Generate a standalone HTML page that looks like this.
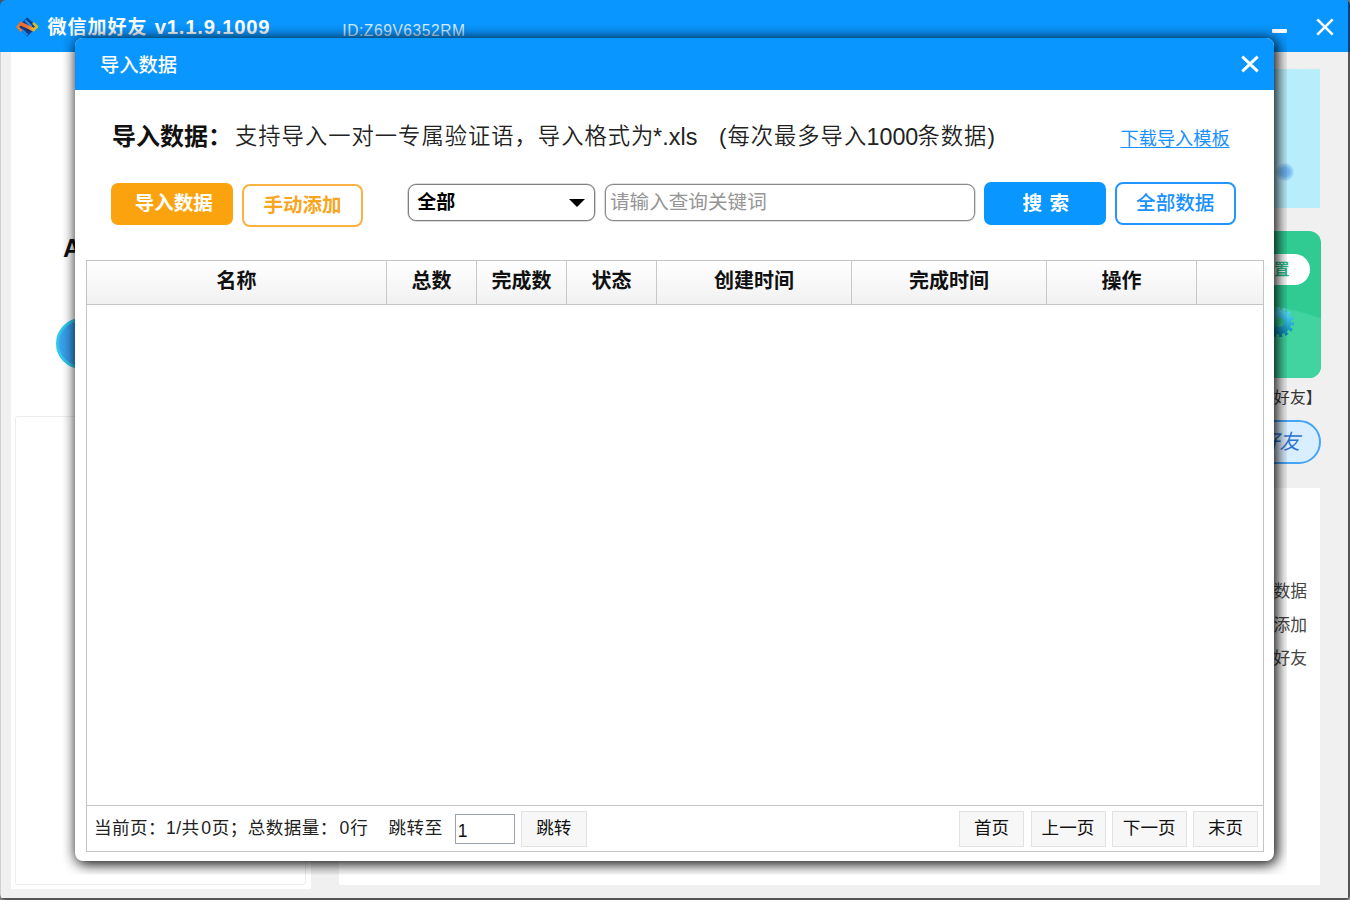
<!DOCTYPE html>
<html lang="zh-CN">
<head>
<meta charset="utf-8">
<title>微信加好友</title>
<style>
*{box-sizing:border-box;margin:0;padding:0}
html,body{width:1350px;height:900px;overflow:hidden;background:#f0f0f0}
body{position:relative;font-family:"Liberation Sans","Noto Sans CJK SC",sans-serif;color:#111}
.abs{position:absolute}
#win{position:absolute;left:0;top:0;width:1350px;height:900px;background:#f0f0f0;overflow:hidden}
#titlebar{position:absolute;left:0;top:0;width:1350px;height:52px;background:#0996ff}
#apptitle{position:absolute;left:47.6px;top:14px;font-size:19px;font-weight:bold;color:#fff;line-height:26px;white-space:nowrap;letter-spacing:1px}
#apptitle b{letter-spacing:.78px;font-size:20.3px;margin-left:.8px}
#appid{position:absolute;left:342.3px;top:21px;font-size:15.6px;color:#d4ebff;line-height:20px;white-space:nowrap;letter-spacing:.55px}

/* background app */
#lp{position:absolute;left:11px;top:52px;width:300px;height:837px;background:#fff}
#lpin{position:absolute;left:15px;top:416px;width:291px;height:469px;border:1px solid #ececec;border-radius:3px}
#rp{position:absolute;left:339px;top:487.5px;width:981px;height:397.5px;background:#fff}
#bluebox{position:absolute;left:338px;top:69px;width:982px;height:139px;background:#b8eefc}
#radio{position:absolute;left:1276px;top:162.5px;width:18px;height:18px;border-radius:50%;background:radial-gradient(circle,#68aeec 0,#72b6ef 35%,#a0d8f8 62%,rgba(184,238,252,0) 100%)}
#green{position:absolute;left:1100px;top:231px;width:221px;height:147px;border-radius:12px;background:#2fcb93;overflow:hidden}
#green:after{content:"";position:absolute;left:-40px;top:72px;width:340px;height:200px;border-radius:50%;background:#41d3a0}
#gpill{position:absolute;left:1222px;top:253.7px;width:87.5px;height:31px;border-radius:15.5px;background:#fff;color:#2bb988;font-size:15.5px;font-weight:bold;line-height:32px;white-space:nowrap;text-align:right;padding-right:20px}
#gear{position:absolute;left:1263.5px;top:306.5px;width:30.5px;height:30.5px}
#lbl1{position:absolute;left:1190px;top:386.5px;width:131.5px;text-align:right;font-size:15.8px;line-height:22px;color:#333;white-space:nowrap}
#pill2{position:absolute;left:1180px;top:420px;width:141px;height:44px;border-radius:22px;border:2px solid #46a4f7;background:#d9efff;color:#2e72d2;font-size:20.5px;line-height:40px;text-align:right;padding-right:19px;white-space:nowrap;font-style:italic}
.rt{position:absolute;left:1206px;width:101px;text-align:right;font-size:16.8px;line-height:22px;color:#444;white-space:nowrap}
#bigA{position:absolute;left:63px;top:232px;font-size:25px;font-weight:bold;line-height:32px;color:#111;font-family:"Liberation Sans",sans-serif}
#lpill{position:absolute;left:56px;top:317.5px;width:160px;height:51.5px;border-radius:26px;border:3px solid #2fc6ea;background:linear-gradient(90deg,#3aa3ec,#2b86dc 30px)}
#bd-l{position:absolute;left:0;top:52px;width:1px;height:848px;background:#cfcfcf}
#bd-r{position:absolute;left:1348px;top:0;width:2px;height:900px;background:linear-gradient(#05407c 0,#05407c 52px,#555 52px)}
#bd-b{position:absolute;left:0;top:898px;width:1350px;height:2px;background:#555}
.cnr{position:absolute;width:8px;height:8px}
/* dialog */
#dlgclip{position:absolute;left:0;top:0;width:1350px;height:900px;clip-path:inset(25px 63px 25.5px 62px)}
#dlg{position:absolute;left:75px;top:38px;width:1199px;height:823px;background:#fff;border-radius:8px;box-shadow:2px 2px 14px 1px rgba(0,0,0,1)}
#dlgbar{position:absolute;left:0;top:0;width:100%;height:52px;background:#0996ff;border-radius:8px 8px 0 0}
#dlgtitle{position:absolute;left:25px;top:15px;font-size:19.3px;font-weight:500;color:#fff;line-height:26px;white-space:nowrap}
.btn{position:absolute;font-size:19.2px;text-align:center;white-space:nowrap;border-radius:6px}

/* dialog content */
#hd{position:absolute;left:37px;top:83px;font-size:24px;font-weight:bold;line-height:32px;white-space:nowrap;color:#111}
#desc{position:absolute;left:160px;top:82.5px;font-size:23.3px;font-weight:350;line-height:32px;white-space:nowrap;color:#222}
#desc span{position:absolute;top:0}
#desc .cj{font-size:22.3px;letter-spacing:1px;top:.8px}
#lnk{position:absolute;left:1045.5px;top:87.7px;font-size:18.2px;line-height:26px;color:#1890ff;text-decoration:underline;text-decoration-thickness:1.4px;text-underline-offset:2.2px;white-space:nowrap}
#b1{left:36px;top:144.5px;width:121.5px;height:42.5px;line-height:41px;background:#fba30f;color:#fff;font-weight:bold;font-size:19.5px;padding-left:4px;border-radius:7px}
#b2{left:167px;top:145.5px;width:121px;height:43.5px;line-height:39px;border:2px solid #fbb240;color:#f8a520;background:#fff;font-weight:bold;font-size:19.5px;border-radius:8px}
#sel{position:absolute;left:333.2px;top:146px;width:187px;height:37.3px;border:1px solid #808080;border-radius:8px;background:#fff;box-shadow:0 0 0 .6px rgba(128,128,128,.55)}
#sel span{position:absolute;left:8px;top:4.8px;font-size:19px;font-weight:bold;line-height:26px;color:#000}
#sel i{position:absolute;left:160px;top:13.5px;width:0;height:0;border-left:8px solid transparent;border-right:8px solid transparent;border-top:8px solid #000}
#inp{position:absolute;left:529.8px;top:146px;width:370.2px;height:37.3px;border:1px solid #8a8a8a;border-radius:8px;background:#fff;box-shadow:0 0 0 .6px rgba(138,138,138,.5)}
#inp span{position:absolute;left:4.2px;top:3.8px;font-size:19.6px;line-height:26px;color:#959595}
#b3{padding-left:2px;left:909px;top:144.4px;width:121.5px;height:42.8px;line-height:42.4px;background:#0996ff;color:#fff;font-weight:bold;font-size:19.6px;word-spacing:2px;border-radius:7px}
#b4{left:1039.5px;top:144px;width:121.5px;height:43px;line-height:39.6px;border:2px solid #2395ff;color:#1890ff;background:#fff;font-size:19.6px;font-weight:500;border-radius:8px}
/* table */
#tbl{position:absolute;left:11px;top:222px;width:1178px;height:592px;border:1px solid #c4c4c4;background:#fff}
#thead{position:absolute;left:0;top:0;width:100%;height:44px;border-bottom:1px solid #c4c4c4;background:linear-gradient(#ffffff,#f1f1f1)}
.th{position:absolute;top:0;height:43px;line-height:41px;text-align:center;font-size:20px;font-weight:bold;color:#111;border-right:1px solid #c8c8c8}
#tfoot{position:absolute;left:0;bottom:0;width:100%;height:46px;border-top:1px solid #c4c4c4;background:#fff;font-size:17.6px;color:#222}
#tfoot span{position:absolute;top:10px;line-height:24px;white-space:nowrap}
#tfoot span i{font-style:normal;margin-left:1.7px;margin-right:.5px}
.pb{position:absolute;top:4.5px;height:36px;line-height:33px;text-align:center;border:1px solid #e2e2e2;background:#f7f7f7;font-size:17.6px;color:#111}
#pg{position:absolute;left:367.5px;top:7.5px;width:60px;height:30px;border:1px solid #9aa2ad;background:#fff;font-size:17.5px;line-height:32px;padding-left:2.2px;color:#111}
</style>
</head>
<body>
<div id="win">
  <div id="titlebar">
    <div id="apptitle">微信加好友 <b>v1.1.9.1009</b></div>
    <div id="appid">ID:Z69V6352RM</div>
    <svg id="appicon" style="position:absolute;left:16px;top:16px;width:22.5px;height:21.5px" viewBox="0 0 24 23">
      <defs><linearGradient id="ig" x1="0" y1="0" x2="1" y2="0"><stop offset="0" stop-color="#ee6a2a"/><stop offset=".45" stop-color="#ef6f3a"/><stop offset="1" stop-color="#f6a62a"/></linearGradient></defs>
      <polygon points="12,1.6 22.8,11.6 12,22 1.4,11.6" fill="#0d3f8f"/>
      <path d="M10.6 3.8 L17.6 10.4 L16 12 L9 5.4 Z" fill="#1f8fee"/>
      <path d="M6.6 13.6 L13 19.8 L11.6 21.2 L5 15 Z" fill="#1f8fee"/>
      <path d="M9 9.5 L15 15.2 L13.5 16.5 L7.6 11 Z" fill="#0a2a66"/>
      <path d="M6 16.2 L1.6 11.6 L5.9 7.7" fill="none" stroke="#ee7a2c" stroke-width="2.6" stroke-linejoin="round"/>
      <path d="M5.2 8.2 L18.6 14.6" fill="none" stroke="url(#ig)" stroke-width="4" stroke-linecap="round"/>
      <path d="M18.2 7.4 L22.4 11.5 L18.4 14.8" fill="none" stroke="#d6bf22" stroke-width="2.8" stroke-linejoin="round"/>
    </svg>
    <div id="minb" style="position:absolute;left:1272px;top:29px;width:15px;height:4px;background:#fff;border-radius:1px"></div>
    <svg style="position:absolute;left:1315px;top:17px;width:20px;height:20px" viewBox="0 0 20 20"><path d="M2.3 2.3 L17.7 17.7 M17.7 2.3 L2.3 17.7" stroke="#fff" stroke-width="2.6" fill="none"/></svg>

  </div>
  
  <div id="lp"></div>
  <div id="lpin"></div>
  <div id="bigA">A</div>
  <div id="lpill"></div>
  <div id="bluebox"></div>
  <div id="radio"></div>
  <div id="green"></div>
  <div id="gpill">设置</div>
  <svg id="gear" viewBox="0 0 32 32"><defs><linearGradient id="gg" x1="0" y1="0" x2="0" y2="1"><stop offset="0" stop-color="#58dcfb"/><stop offset="1" stop-color="#0a86b4"/></linearGradient></defs><g fill="url(#gg)" stroke="url(#gg)"><circle cx="16" cy="16" r="12.6" stroke="none"/><g stroke-width="3.6" stroke-dasharray="3.2 3.08" fill="none"><circle cx="16" cy="16" r="14"/></g></g><circle cx="16" cy="16" r="5" fill="#2fcb93"/></svg>
  <div id="lbl1">【微信加好友】</div>
  <div id="pill2">加好友</div>
  <div id="rp"></div>
  <div class="rt" style="top:580.5px">导入数据</div>
  <div class="rt" style="top:614.5px">手动添加</div>
  <div class="rt" style="top:647.5px">微信好友</div>
  <div id="bd-l"></div><div id="bd-r"></div><div id="bd-b"></div>
  
  <svg class="cnr" style="left:0;top:0" viewBox="0 0 8 8"><path d="M0 0H6A6 6 0 0 0 0 6Z" fill="#4a5560"/></svg>
  <svg class="cnr" style="left:1342px;top:0" viewBox="0 0 8 8"><path d="M8 0H3A5 5 0 0 1 8 5Z" fill="#7a7470"/></svg>
  <svg class="cnr" style="left:0;top:892px" viewBox="0 0 8 8"><path d="M0 8H6A6 6 0 0 1 0 2Z" fill="#7c7c7c"/></svg>
  <svg class="cnr" style="left:1342px;top:892px" viewBox="0 0 8 8"><path d="M8 8H2.5A5.5 5.5 0 0 0 8 2.5Z" fill="#8a8a8a"/></svg>
  <div id="dlgclip"><div id="dlg">
    <div id="dlgbar"><div id="dlgtitle">导入数据</div><svg style="position:absolute;left:1165px;top:16.3px;width:20px;height:20px" viewBox="0 0 20 20"><path d="M2.3 2.6 L17.7 17.4 M17.7 2.6 L2.3 17.4" stroke="#fff" stroke-width="2.9" fill="none"/></svg></div>
    <div id="hd">导入数据：</div>
    <div id="desc"><span class="cj" style="left:0">支持导入一对一专属验证语，导入格式为</span><span id="d2" style="left:418px;letter-spacing:.1px">*.xls</span><span id="d3" class="cj" style="left:484px">(每次最多导入</span><span id="d4" style="left:631.5px;letter-spacing:0">1000</span><span id="d5" class="cj" style="left:682.5px">条数据)</span></div>
    <div id="lnk">下载导入模板</div>
    <div class="btn" id="b1">导入数据</div>
    <div class="btn" id="b2">手动添加</div>
    <div id="sel"><span>全部</span><i></i></div>
    <div id="inp"><span>请输入查询关键词</span></div>
    <div class="btn" id="b3">搜 索</div>
    <div class="btn" id="b4">全部数据</div>
    <div id="tbl">
      <div id="thead">
        <div class="th" style="left:0;width:300px">名称</div>
        <div class="th" style="left:300px;width:90px">总数</div>
        <div class="th" style="left:390px;width:90px">完成数</div>
        <div class="th" style="left:480px;width:90px">状态</div>
        <div class="th" style="left:570px;width:195px">创建时间</div>
        <div class="th" style="left:765px;width:195px">完成时间</div>
        <div class="th" style="left:960px;width:150px">操作</div>
      </div>
      <div id="tfoot">
        <span style="left:7px;letter-spacing:.4px">当前页：1/共<i>0</i>页；总数据量：<i>0</i>行</span>
        <span style="left:301.5px;letter-spacing:.5px">跳转至</span>
        <div id="pg">1</div>
        <div class="pb" style="left:434px;width:65.5px">跳转</div>
        <div class="pb" style="left:872px;width:65px">首页</div>
        <div class="pb" style="left:943.5px;width:75px">上一页</div>
        <div class="pb" style="left:1025px;width:74.5px">下一页</div>
        <div class="pb" style="left:1106px;width:65px">末页</div>
      </div>
    </div>

  </div></div>
</div>
</body>
</html>
